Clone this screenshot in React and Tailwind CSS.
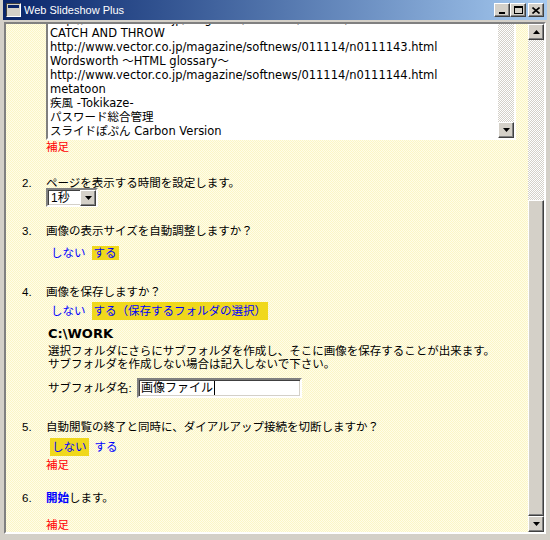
import React from 'react';

const raised =
  'bg-[#d4d0c8] border border-t-white border-l-white border-r-[#404040] border-b-[#404040] shadow-[inset_-1px_-1px_#808080]';
const sunken =
  'border-2 border-t-[#808080] border-l-[#808080] border-r-white border-b-white shadow-[inset_1px_1px_#404040,inset_-1px_-1px_#d4d0c8]';
const checker =
  'bg-[repeating-conic-gradient(#d4d0c8_0_25%,#ffffff_0_50%)] bg-[length:2px_2px]';

const Arrow = ({ up }) => (
  <svg width="7" height="4" viewBox="0 0 7 4">
    {up ? <path d="M3.5 0 L7 4 L0 4 Z" fill="#000" /> : <path d="M0 0 L7 0 L3.5 4 Z" fill="#000" />}
  </svg>
);

const ScrollBtn = ({ up }) => (
  <div className={`w-[16px] h-[16px] flex items-center justify-center shrink-0 ${raised}`}>
    <Arrow up={up} />
  </div>
);

const Choice = ({ on, children }) => (
  <span className={`px-[2px] text-[#0000ff] ${on ? 'bg-[#f0d81c]' : ''}`}>{children}</span>
);

const Row = ({ n, className, children }) => (
  <div className={`flex leading-[14px] ${className}`}>
    <span className="w-[40px] pl-[16px] shrink-0">{n}.</span>
    <div>{children}</div>
  </div>
);

// the list is scrolled, only the tail of it shows
const lines = [
  'http://www.vector.co.jp/magazine/softnews/011114/n0111142.html',
  'CATCH AND THROW',
  'http://www.vector.co.jp/magazine/softnews/011114/n0111143.html',
  'Wordsworth ～HTML glossary～',
  'http://www.vector.co.jp/magazine/softnews/011114/n0111144.html',
  'metatoon',
  '疾風 -Tokikaze-',
  'パスワード総合管理',
  'スライドぽぷん Carbon Version',
];

export default function App() {
  return (
    <div className="w-[550px] h-[540px] bg-[#d4d0c8] flex flex-col overflow-hidden font-['Liberation_Sans','Noto_Sans_CJK_JP',sans-serif] text-black">
      {/* title bar */}
      <div className="h-[20px] mx-[3px] bg-gradient-to-r from-[#0a246a] to-[#a6caf0] flex items-center pl-[3px] pr-[3px] shrink-0">
        <div className="w-[15px] h-[14px] border border-[#404040] border-r-white border-b-white bg-[#d4d0c8] flex flex-col p-[1px]">
          <div className="h-[3px] bg-[#0a246a]" />
          <div className="flex-1 bg-[#d4d0c8]" />
        </div>
        <span className="ml-[3px] text-white text-[11px] leading-none">Web Slideshow Plus</span>
        <div className="ml-auto flex items-center">
          <div className={`w-[16px] h-[14px] flex items-end justify-center pb-[2px] ${raised}`}>
            <div className="w-[6px] h-[2px] bg-black" />
          </div>
          <div className={`w-[16px] h-[14px] flex items-center justify-center ${raised}`}>
            <div className="w-[9px] h-[8px] border border-black border-t-2" />
          </div>
          <div className={`w-[16px] h-[14px] ml-[2px] flex items-center justify-center ${raised}`}>
            <svg width="8" height="7" viewBox="0 0 8 7">
              <path d="M0.5 0.5 L7.5 6.5 M7.5 0.5 L0.5 6.5" stroke="#000" strokeWidth="1.6" />
            </svg>
          </div>
        </div>
      </div>

      {/* client area */}
      <div className="mt-[2px] mx-[4px] mb-[4px] h-[512px] border-2 border-t-[#808080] border-l-[#808080] border-r-white border-b-white shadow-[inset_1px_1px_#404040] flex">
        <div className="flex-1 overflow-hidden bg-[repeating-conic-gradient(#fffde8_0_25%,#fbf5c6_0_50%)] bg-[length:2px_2px] text-[11.5px] leading-[14px]">
          {/* item 1 (scrolled) */}
          <div className="pl-[40px] mt-[-14px]">
            <div className={`w-[470px] h-[130px] flex ${sunken}`}>
              <div className="flex-1 bg-white pl-[2px] overflow-hidden font-['DejaVu_Sans','Noto_Sans_CJK_JP',sans-serif] text-[11.5px] leading-[14px] whitespace-nowrap">
                {lines.map((l, i) => (
                  <div key={i}>{l}</div>
                ))}
              </div>
              <div className={`w-[16px] flex flex-col justify-end ${checker}`}>
                <ScrollBtn />
              </div>
            </div>
            <div className="text-[#ff0000]">補足</div>
          </div>

          <Row n="2" className="mt-[22px]">
            ページを表示する時間を設定します。
          </Row>
          <div className="pl-[40px] mt-[-2px]">
            <div className={`w-[52px] h-[19px] bg-white flex items-center ${sunken}`}>
              <span className="flex-1 pl-[3px] text-[12px]">1秒</span>
              <ScrollBtn />
            </div>
          </div>

          <Row n="3" className="mt-[17px]">
            画像の表示サイズを自動調整しますか？
          </Row>
          <div className="pl-[43px] mt-[8px] flex gap-[4px] leading-[14px]">
            <Choice>しない</Choice>
            <Choice on>する</Choice>
          </div>

          <Row n="4" className="mt-[25px]">
            画像を保存しますか？
          </Row>
          <div className="pl-[43px] mt-[3px] flex gap-[4px] leading-[18px]">
            <Choice>しない</Choice>
            <Choice on>する（保存するフォルダの選択）</Choice>
          </div>
          <div className="pl-[42px] mt-[6px] font-['DejaVu_Sans',sans-serif] font-bold text-[13px] leading-[16px]">
            C:\WORK
          </div>
          <div className="pl-[42px] mt-[3px] leading-[13px]">
            選択フォルダにさらにサブフォルダを作成し、そこに画像を保存することが出来ます。
            <br />
            サブフォルダを作成しない場合は記入しないで下さい。
          </div>
          <div className="pl-[42px] mt-[7px] flex items-center">
            <span className="w-[89px]">サブフォルダ名:</span>
            <div className={`w-[165px] h-[20px] bg-white flex items-center pl-[2px] ${sunken}`}>
              <span className="text-[12px]">画像ファイル</span>
              <span className="w-[1px] h-[14px] bg-black ml-[1px]" />
            </div>
          </div>

          <Row n="5" className="mt-[22px]">
            自動閲覧の終了と同時に、ダイアルアップ接続を切断しますか？
          </Row>
          <div className="pl-[44px] mt-[4px] flex gap-[4px] leading-[18px]">
            <Choice on>しない</Choice>
            <Choice>する</Choice>
          </div>
          <div className="pl-[40px] mt-[2px] text-[#ff0000]">補足</div>

          <Row n="6" className="mt-[19px]">
            <span className="text-[#0000ff] font-bold">開始</span>します。
          </Row>
          <div className="pl-[40px] mt-[13px] text-[#ff0000]">補足</div>
        </div>

        {/* page scrollbar */}
        <div className="w-[16px] flex flex-col shrink-0">
          <ScrollBtn up />
          <div className={`h-[160px] ${checker}`} />
          <div className={`flex-1 ${raised}`} />
          <ScrollBtn />
        </div>
      </div>
    </div>
  );
}
